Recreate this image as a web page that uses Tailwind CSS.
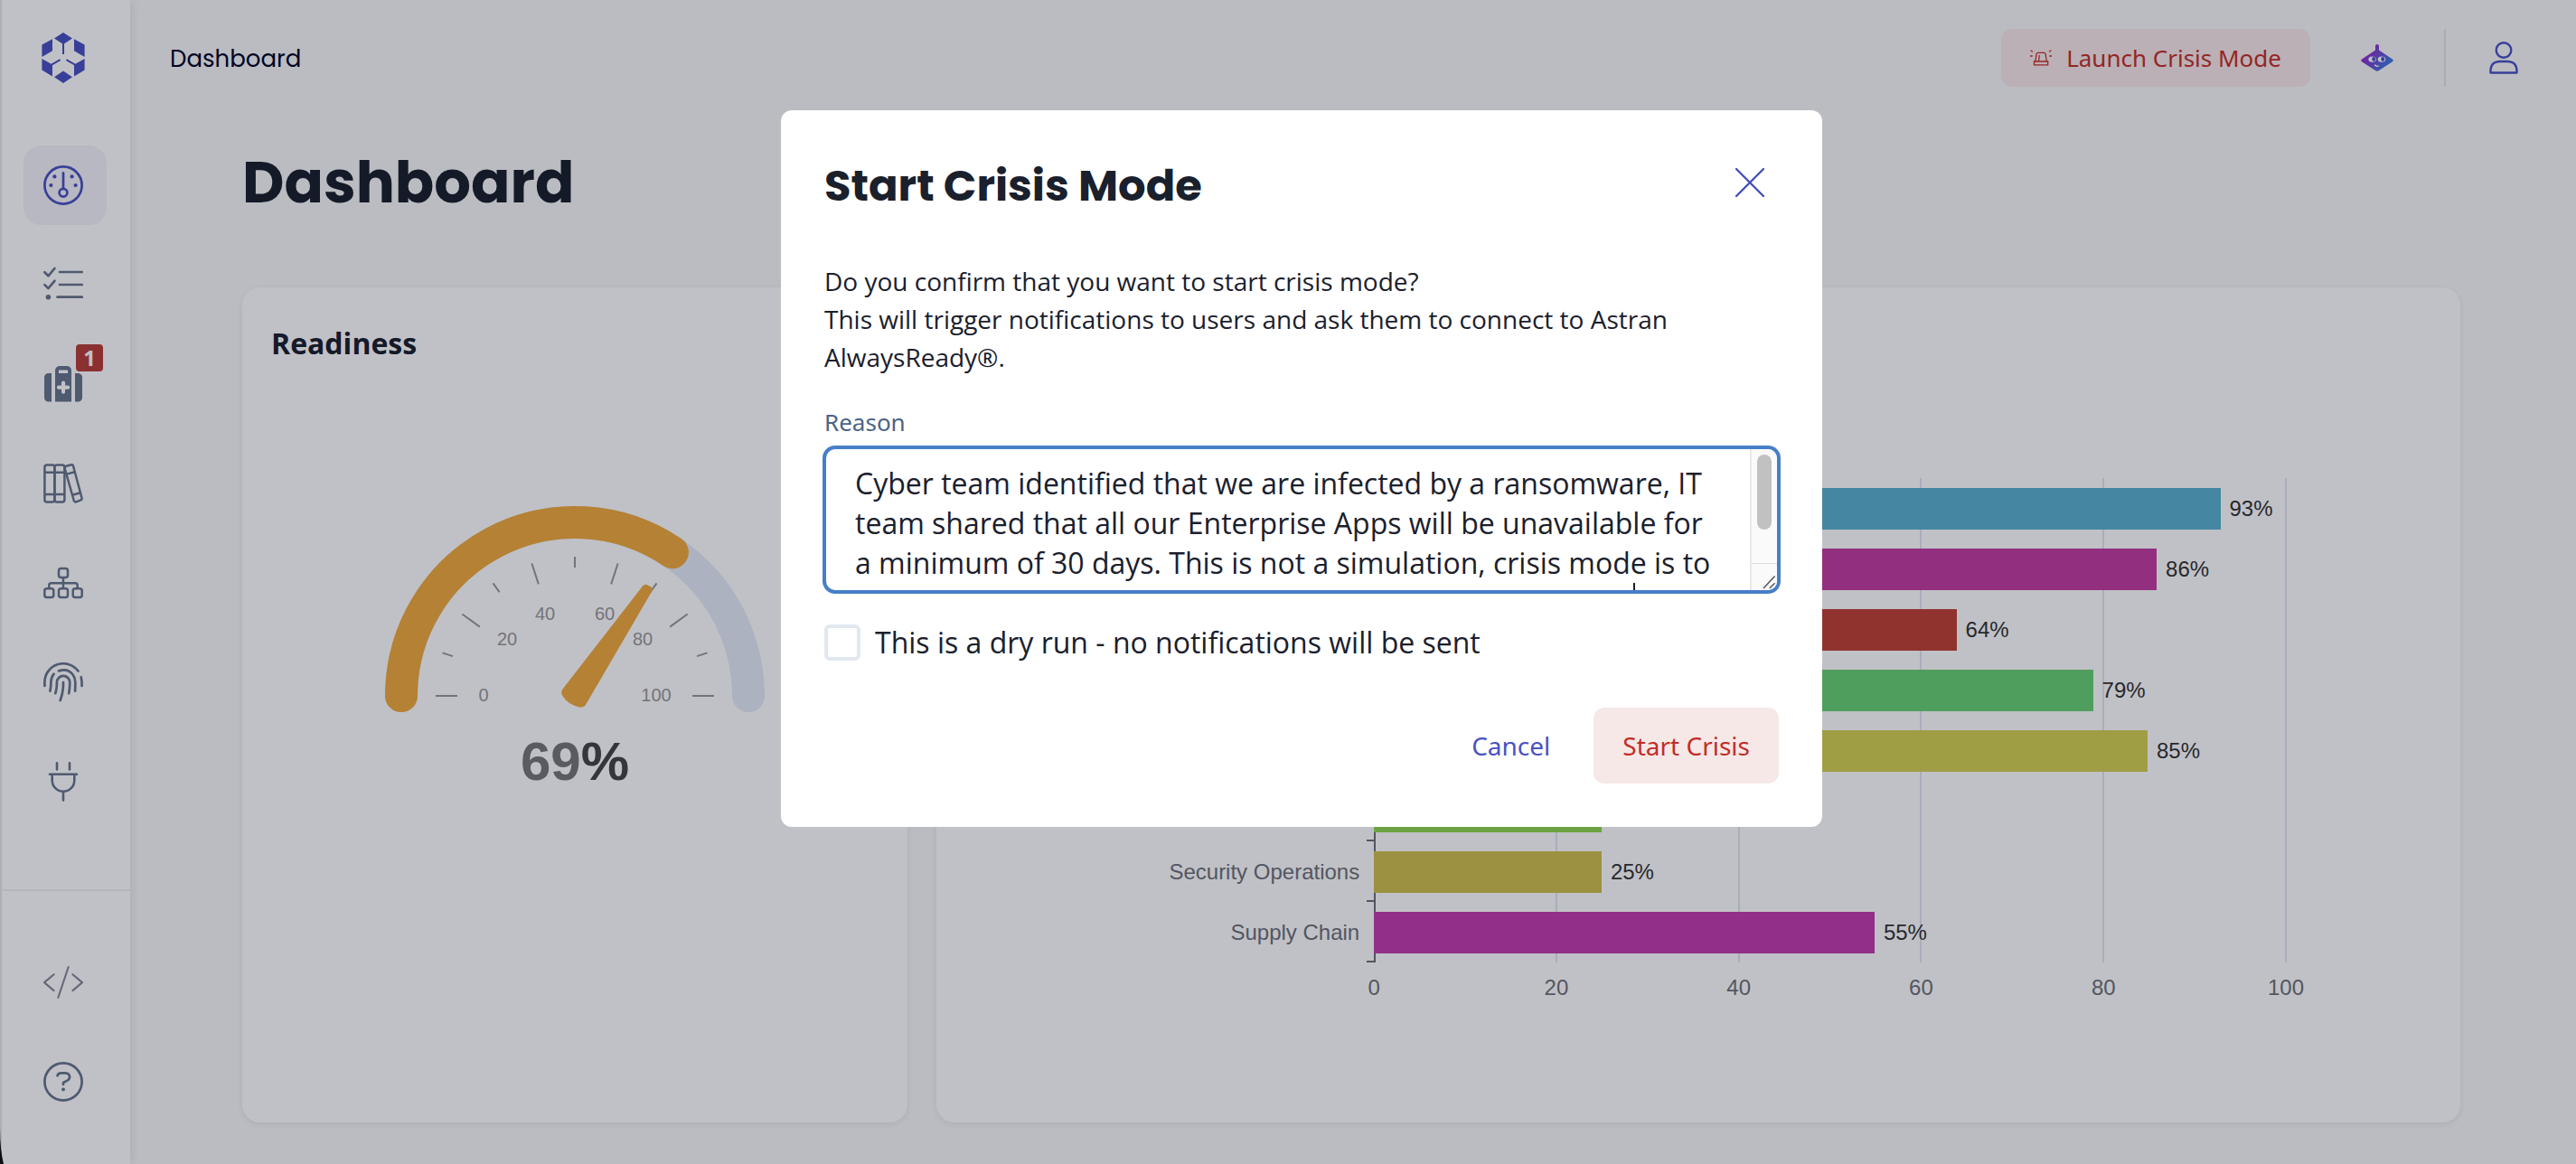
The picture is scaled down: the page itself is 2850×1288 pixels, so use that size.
<!DOCTYPE html>
<html lang="en">
<head>
    <meta charset="UTF-8">
    <meta name="viewport" content="width=device-width, initial-scale=1.0">
    <title>Dashboard - AlwaysReady</title>
    <script src="https://cdn.jsdelivr.net/npm/@tailwindcss/browser@4"></script>
</head>
<body class="bg-[#f9f9f9] text-[#1a202c] font-['Open_Sans','Noto_Sans',sans-serif]">
    <div class="flex min-h-screen">
        <!-- Sidebar -->
        <aside class="relative flex w-36 shrink-0 flex-col border-l-2 border-gray-200 bg-white text-[#68768c] shadow-[0_0_12px_rgba(0,0,0,0.12)]">
            <a href="#" aria-label="Home" class="ml-11 mt-9 text-[#4a52c3]">
                <svg class="h-14 w-12" viewBox="0 0 48 56" fill="currentColor">
                    <path d="M24 0l10 6.4-10 6.6-10-6.6zM24 42.6l10 6.7L24 56l-10-6.7zM.4 13.6L12 7.3v12.9L.4 27zM47.6 13.6L36 7.3v12.9L47.6 27zM.4 29L12 35.4V48.4L.4 41.6zM47.6 29L36 35.4V48.4l11.6-6.8z"/>
                    <path d="M24 12v12M11 35.6l9.6-5.4M37 35.6l-9.6-5.4" fill="none" stroke="currentColor" stroke-width="2"/>
                </svg>
            </a>
            <nav class="ml-6 mt-[69px] flex flex-col gap-[22px]">
                <a href="#" aria-label="Dashboard" class="flex h-[88px] w-[92px] items-center rounded-[20px] bg-[#f3f3f8] pl-[22px] text-[#4a52c3]">
                    <svg class="size-11" viewBox="0 0 44 44" fill="none" stroke="currentColor" stroke-width="2.7" stroke-linecap="round">
                        <circle cx="22" cy="22" r="20.6"/><circle cx="22" cy="30.3" r="4.4"/><path d="M22 8.3v17.4"/>
                        <g fill="currentColor" stroke="none"><circle cx="12.4" cy="12.4" r="2.1"/><circle cx="31.6" cy="12.4" r="2.1"/><circle cx="8.4" cy="22" r="2.1"/><circle cx="35.6" cy="22" r="2.1"/></g>
                    </svg>
                </a>
                <a href="#" aria-label="Checklists" class="flex h-[88px] w-[92px] items-center pl-[22px]">
                    <svg class="size-11" viewBox="0 0 44 44" fill="none" stroke="currentColor" stroke-width="2.7" stroke-linecap="round" stroke-linejoin="round">
                        <path d="M18 8h24.7M18 22h24.7M15.5 35.7h27.2M1.4 8.3l4 4L12.4 4M1.4 22.1l4 4 7-8.3"/>
                        <circle cx="5.4" cy="35.7" r="2.8" fill="currentColor" stroke="none"/>
                    </svg>
                </a>
                <a href="#" aria-label="Crisis kit, 1 new" class="relative flex h-[88px] w-[92px] items-center pl-[22px]">
                    <svg class="size-11" viewBox="0 0 44 44" fill="currentColor">
                        <path d="M9 10v31.6H5.5a4.5 4.5 0 0 1-4.5-4.5V14.5A4.5 4.5 0 0 1 5.5 10zM35 10v31.6h3.5a4.5 4.5 0 0 0 4.5-4.5V14.5a4.5 4.5 0 0 0-4.5-4.5z"/>
                        <path fill-rule="evenodd" d="M13 41.6V7a5 5 0 0 1 5-5h8a5 5 0 0 1 5 5v34.6zM17.5 6.5a.8.8 0 0 0-.6.7V10h10.2V7.2a.8.8 0 0 0-.6-.7zM20 20.5v3h-3a2 2 0 0 0 0 4.3h3v3a2 2 0 0 0 4.1 0v-3h3a2 2 0 0 0 0-4.3h-3v-3a2 2 0 0 0-4.1 0z"/>
                    </svg>
                    <span class="absolute left-[58px] top-0 flex size-[30px] items-center justify-center rounded-sm bg-[#b93e37] text-2xl font-bold text-white">1</span>
                </a>
                <a href="#" aria-label="Library" class="flex h-[88px] w-[92px] items-center pl-[22px]">
                    <svg class="size-11" viewBox="0 0 44 44" fill="none" stroke="currentColor" stroke-width="2.5" stroke-linejoin="round">
                        <rect x="1.4" y="1.4" width="11" height="41.2" rx="2.5"/><rect x="12.4" y="1.4" width="11" height="41.2" rx="2.5"/>
                        <path d="M1.4 9.7h22M1.4 34h22M25.3 2.7l5.6-1.5q1.6-.3 2.1 1.3L42.5 38q.4 1.7-1.2 2.3l-5 2q-2 .4-2.5-1.3L23.6 5.1q-.2-1.8 1.7-2.4zM25.5 11.6l9.3-2.3M31.4 35l9.3-2.7"/>
                    </svg>
                </a>
                <a href="#" aria-label="Organization" class="flex h-[88px] w-[92px] items-center pl-[22px]">
                    <svg class="size-11" viewBox="0 0 44 44" fill="none" stroke="currentColor" stroke-width="2.5">
                        <rect x="17" y="6" width="10" height="10" rx="2.5"/><rect x="1.3" y="28.3" width="10" height="9.8" rx="2.5"/><rect x="17" y="28.3" width="10" height="9.8" rx="2.5"/><rect x="32.7" y="28.3" width="10" height="9.8" rx="2.5"/>
                        <path d="M22 16v12M6.3 28v-3.5q0-2.3 2.3-2.3h26.8q2.3 0 2.3 2.3V28"/>
                    </svg>
                </a>
                <a href="#" aria-label="Identities" class="flex h-[88px] w-[92px] items-center pl-[22px]">
                    <svg class="size-11" viewBox="0 0 44 44" fill="none" stroke="currentColor" stroke-width="2.7" stroke-linecap="round">
                        <path d="M1.4 26v-4A20.6 20.6 0 0 1 38.5 9.5M41.7 16.2q1 4.3.9 9.8M17 9.4Q27 6 32.6 13.5q2.7 3.7 2.7 8.5 0 5-.2 9.7M11.5 12.8Q8.3 16.5 8.4 22q0 5-1 9.7M13.3 34.2Q15 28.5 14.9 22a7.1 7.1 0 0 1 14.3 0q.1 6.5-1 12.2M22 22q.2 11-3.3 20"/>
                    </svg>
                </a>
                <a href="#" aria-label="Integrations" class="flex h-[88px] w-[92px] items-center pl-[22px]">
                    <svg class="size-11" viewBox="0 0 44 44" fill="none" stroke="currentColor" stroke-width="2.6" stroke-linecap="round">
                        <path d="M15 1.4v7M29 1.4v7M7 13.7h30M9.7 13.7v6.7a12.3 12.3 0 0 0 24.6 0v-6.7M22 33v9.6"/>
                    </svg>
                </a>
            </nav>
            <div class="mt-auto flex flex-col gap-[22px] border-t-2 border-[#f0f1f3] pb-[47px] pl-6 pt-[57px]">
                <a href="#" aria-label="Developers" class="flex h-[88px] w-[92px] items-center pl-[22px] text-[#898699]">
                    <svg class="size-11" viewBox="0 0 44 44" fill="none" stroke="currentColor" stroke-width="2.1" stroke-linecap="round" stroke-linejoin="round">
                        <path d="M27.7 5L16.3 39M11.6 13.2L1 22.1l10.6 9M32.4 13.2L43 22.1l-10.6 9"/>
                    </svg>
                </a>
                <a href="#" aria-label="Help" class="flex h-[88px] w-[92px] items-center pl-[22px]">
                    <svg class="size-11" viewBox="0 0 44 44" fill="none" stroke="currentColor" stroke-width="2.7" stroke-linecap="round" stroke-linejoin="round">
                        <circle cx="22" cy="22" r="20.6"/><path d="M15.5 15.3q.8-3 4-3h4.8q4.5.2 4.8 4.3 0 2.6-2.5 4L22 23v2"/><circle cx="22" cy="30.4" r="2" fill="currentColor" stroke="none"/>
                    </svg>
                </a>
            </div>
        </aside>

        <div class="flex min-w-0 flex-1 flex-col">
            <!-- Top bar -->
            <header class="flex h-32 items-center pl-11 pr-16">
                <span class="pt-0.5 font-['Poppins','Inter',sans-serif] text-[26px] text-[#00052a]">Dashboard</span>
                <button type="button" class="ml-auto flex h-16 items-center gap-4 rounded-xl bg-[#f9e9e8] px-8 font-['Noto_Sans','Open_Sans',sans-serif] text-[26px] text-[#c52f2a]">
                    <svg class="h-[18px] w-6" viewBox="0 0 24 18" fill="none" stroke="currentColor" stroke-width="1.3" stroke-linecap="round">
                        <path d="M6 12.5L7 5q.3-1.6 2-1.6h6.2q1.7 0 2 1.6l1 7.5M9.7 11.5l.5-5M4.5 13h15.2v3.8H4.5zM1 1l1.5 1M.5 7h1.7M23 1l-1.5 1M23.5 7h-1.7"/>
                    </svg>
                    Launch Crisis Mode
                </button>
                <button type="button" aria-label="Assistant" class="ml-14">
                    <svg class="h-[30px] w-9" viewBox="0 0 36 30">
                        <defs><linearGradient id="bot" x1="0" y1="0" x2="1" y2="0.6"><stop offset="0.15" stop-color="#a51fc8"/><stop offset="1" stop-color="#3a7fe0"/></linearGradient></defs>
                        <path fill="url(#bot)" d="M16 2a2 2 0 0 1 4 0v4.5l15 10q1.6 1.3 0 2.7L20 29q-2 1.4-4 0L1 19.2q-1.6-1.4 0-2.7l15-10z"/>
                        <ellipse cx="12.6" cy="16.6" rx="4.2" ry="3.2" fill="#fff"/><ellipse cx="23" cy="16.6" rx="4.2" ry="3.2" fill="#fff"/>
                        <ellipse cx="14.2" cy="16.5" rx="1.9" ry="2.4" fill="#4a52c3"/><ellipse cx="24.2" cy="16.5" rx="1.9" ry="2.4" fill="#4a52c3"/>
                        <path d="M15.5 23q2 2 4 1" fill="none" stroke="#fff" stroke-width="1.3" stroke-linecap="round"/>
                    </svg>
                </button>
                <div class="ml-14 h-16 w-0.5 bg-[#e2e2ee]"></div>
                <button type="button" aria-label="Account" class="ml-12 text-[#4a52c3]">
                    <svg class="h-9 w-8" viewBox="0 0 32 36" fill="none" stroke="currentColor" stroke-width="2.4" stroke-linejoin="round">
                        <ellipse cx="16" cy="9.5" rx="8.3" ry="8.3"/><path d="M1.5 34.5Q.7 22 12 22h8q11.3 0 10.5 12.5z"/>
                    </svg>
                </button>
            </header>

            <main class="flex flex-1 flex-col pb-[46px] pl-[124px] pr-32">
                <h1 class="mt-6 font-['Poppins','Inter',sans-serif] text-[64px] font-bold leading-[100px]">Dashboard</h1>

                <div class="mt-[66px] flex flex-1 gap-8">
                    <!-- Readiness -->
                    <section class="flex w-[30%] flex-col rounded-[20px] bg-white shadow-[0_2px_8px_rgba(0,0,0,0.08)]">
                        <h2 class="ml-8 mt-10 text-[32px] font-bold leading-[44px]">Readiness</h2>
                        <svg class="mx-auto mt-[148px] h-[330px] w-[440px] font-['Liberation_Sans',Arial,sans-serif]" viewBox="416 550 440 330" text-anchor="middle">
                            <g fill="none" stroke-width="36" stroke-linecap="round">
                                <path stroke="#e6ebf8" d="M444 770a192 192 0 0 1 384 0"/>
                                <path stroke="#f1aa3c" d="M444 770A192 192 0 0 1 743.9 611.2"/>
                            </g>
                            <g id="ticks" stroke="#999" stroke-width="2"></g>
                            <g fill="#999" font-size="20">
                                <text x="535" y="776">0</text><text x="561" y="714">20</text><text x="603" y="686">40</text>
                                <text x="669" y="686">60</text><text x="711" y="714">80</text><text x="726" y="776">100</text>
                            </g>
                            <path fill="#f1aa3c" d="M711 648.5q2.5-3 6.5-.5 5.5 2.5 4.5 5L648.5 779q-2 3.8-6.5 3.8-14.5-3-20.3-14-1.2-3.5.8-6.3z"/>
                            <text x="636" y="863" fill="#777" font-size="60" font-weight="bold">69<tspan fill="#464646">%</tspan></text>
                        </svg>
                    </section>

                    <!-- Readiness per team -->
                    <section class="flex-1 rounded-[20px] bg-white pl-[484px] pr-[193px] pt-[211px] font-['Liberation_Sans',Arial,sans-serif] text-2xl text-[#6e7079] shadow-[0_2px_8px_rgba(0,0,0,0.08)]">
                        <div class="relative">
                            <div id="grid" class="absolute inset-0"></div>
                            <div id="bars" class="relative"></div>
                        </div>
                        <div id="axis" class="relative mt-3 h-8"></div>
                    </section>
                </div>
            </main>
        </div>
    </div>

    <!-- Start crisis modal -->
    <div class="fixed inset-0 flex items-start justify-center bg-[#02061b]/25 pl-[30px] pt-[122px]">
        <form role="dialog" aria-labelledby="modalTitle" class="w-full max-w-[1152px] rounded-xl bg-white p-12">
            <div class="flex items-start justify-between">
                <h2 id="modalTitle" class="font-['Poppins','Inter',sans-serif] text-[48px] font-bold leading-[72px]">Start Crisis Mode</h2>
                <button type="button" aria-label="Close" class="p-4 text-[#4550b8]">
                    <svg class="size-8" viewBox="0 0 32 32" fill="none" stroke="currentColor" stroke-width="2.4" stroke-linecap="round"><path d="M1 1l30 30M31 1L1 31"/></svg>
                </button>
            </div>
            <p class="mt-12 text-[28px] leading-[42px]">
                Do you confirm that you want to start crisis mode?<br>
                This will trigger notifications to users and ask them to connect to Astran AlwaysReady®.
            </p>
            <label for="reason" class="mt-8 block font-['Noto_Sans','Open_Sans',sans-serif] text-[26px] leading-[38px] text-[#4a6488]">Reason</label>
            <div class="relative mt-[9px] h-40">
                <textarea id="reason" name="reason" class="block h-full w-full resize-none overflow-hidden rounded-xl border-2 border-[#467fc8] bg-white pl-8 pr-[62px] pt-4 text-[32px] leading-[44px] outline-none ring-2 ring-[#467fc8]">Cyber team identified that we are infected by a ransomware, IT team shared that all our Enterprise Apps will be unavailable for a minimum of 30 days. This is not a simulation, crisis mode is to</textarea>
                <!-- Scrollbar and resize grip -->
                <div class="absolute bottom-0.5 right-0.5 top-0.5 flex w-[30px] flex-col justify-between rounded-r-[10px] border-l-2 border-[#e8e8e8] bg-[#fafafa]">
                    <div class="ml-1.5 mt-1.5 h-[83px] w-4 rounded-full bg-[#c1c1c1]"></div>
                    <svg class="h-[30px] w-7 border-t border-[#dcdcdc]" viewBox="0 0 28 30" fill="none" stroke="#555" stroke-width="1.5"><path d="M13 28l13-14M20 28l6-6"/></svg>
                </div>
                <div class="absolute bottom-0.5 right-[159px] h-2 w-0.5 bg-[#1a202c]"></div>
            </div>
            <div class="mt-9 flex items-center gap-4">
                <input id="dryRun" name="dryRun" type="checkbox" class="size-10 appearance-none rounded-md border-4 border-[#e2e8f0] bg-white">
                <label for="dryRun" class="text-[32px] leading-10">This is a dry run - no notifications will be sent</label>
            </div>
            <div class="mt-[52px] flex justify-end gap-4 font-['Noto_Sans','Open_Sans',sans-serif] text-[28px]">
                <button type="button" class="h-[84px] px-8 text-[#4a52c3]">Cancel</button>
                <button type="submit" class="h-[84px] rounded-xl bg-[#f6e8e7] px-8 text-[#c22d27]">Start Crisis</button>
            </div>
        </form>
    </div>

    <!-- Window corner -->
    <svg class="fixed bottom-0 left-0 h-10 w-1" viewBox="0 0 4 40"><path d="M0 0q0 24 4 40H0z" fill="#0b0d14"/></svg>

    <script>
        // Gauge ticks: long one every 20, short one between
        const ticks = document.getElementById('ticks');
        for (let i = 0; i <= 10; i++) {
            const a = Math.PI * (1 - i / 10);
            const inner = i % 2 ? 142 : 130;
            const line = document.createElementNS('http://www.w3.org/2000/svg', 'line');
            line.setAttribute('x1', 636 + 154 * Math.cos(a));
            line.setAttribute('y1', 770 - 154 * Math.sin(a));
            line.setAttribute('x2', 636 + inner * Math.cos(a));
            line.setAttribute('y2', 770 - inner * Math.sin(a));
            ticks.appendChild(line);
        }

        // Bar chart
        const teams = [
            { name: '', value: 93, color: '#5bb1d0' },
            { name: '', value: 86, color: '#c23da0' },
            { name: '', value: 64, color: '#bf4234' },
            { name: '', value: 79, color: '#69d174' },
            { name: '', value: 85, color: '#d3d153' },
            { name: '', value: 25, color: '#8fd64f' },
            { name: 'Security Operations', value: 25, color: '#cfbf4c' },
            { name: 'Supply Chain', value: 55, color: '#c23dac' },
        ];
        document.getElementById('bars').innerHTML = teams.map(t => `
            <div class="relative flex h-[67px] items-center border-l-2 border-[#6e7079]">
                <span class="absolute right-full mr-[18px] whitespace-nowrap">${t.name}</span>
                <span class="absolute right-full bottom-0 h-0.5 w-2.5 bg-[#6e7079]"></span>
                <div class="-ml-0.5 h-[46px] shrink-0" style="width:${t.value}%;background:${t.color}"></div>
                <span class="ml-2.5 text-[#333]">${t.value}%</span>
            </div>`).join('');

        const steps = [0, 20, 40, 60, 80, 100];
        document.getElementById('grid').innerHTML = steps.slice(1).map(s =>
            `<div class="absolute inset-y-0 -ml-px w-0.5 bg-[#e0e4f1]" style="left:${s}%"></div>`).join('');
        document.getElementById('axis').innerHTML = steps.map(s =>
            `<span class="absolute -translate-x-1/2" style="left:${s}%">${s}</span>`).join('');
    </script>
</body>
</html>
